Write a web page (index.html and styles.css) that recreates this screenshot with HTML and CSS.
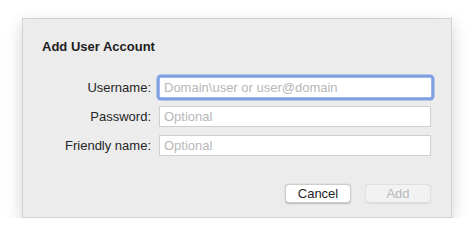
FILE: index.html
```html
<!DOCTYPE html>
<html>
<head>
<meta charset="utf-8">
<link rel="stylesheet" href="styles.css">
</head>
<body>
<div class="dialog">
  <div class="title">Add User Account</div>
  <div class="form">
    <label class="label">Username:</label>
    <input class="field focused" type="text" placeholder="Domain\user or user@domain">
    <label class="label">Password:</label>
    <input class="field" type="text" placeholder="Optional">
    <label class="label">Friendly name:</label>
    <input class="field" type="text" placeholder="Optional">
  </div>
  <div class="actions">
    <button class="btn">Cancel</button>
    <button class="btn disabled">Add</button>
  </div>
</div>
</body>
</html>
```
FILE: styles.css
```css
html, body {
  margin: 0;
  padding: 0;
  background: #ffffff;
}
body {
  font-family: "Liberation Sans", Arial, sans-serif;
  font-size: 13px;
  color: #262626;
}
.dialog {
  box-sizing: border-box;
  margin: 18px 0 0 22px;
  width: 430px;
  height: 200px;
  background: #ececec;
  border: 1px solid #d2d2d2;
  box-shadow: 0 6px 16px rgba(0, 0, 0, 0.18);
  padding-top: 20px;
}
.title {
  margin-left: 19px;
  font-weight: bold;
  font-size: 13px;
  line-height: 15px;
  letter-spacing: 0;
  color: #1e1e1e;
}
.form {
  margin-top: 23px;
  display: grid;
  grid-template-columns: 128px 272px;
  column-gap: 8px;
  row-gap: 8px;
  align-items: center;
}
.label {
  text-align: right;
  line-height: 21px;
  color: #262626;
}
.field {
  box-sizing: border-box;
  height: 21px;
  width: 272px;
  margin: 0;
  padding: 0 4px;
  border: 1px solid #cfcfcf;
  background: #ffffff;
  font-family: "Liberation Sans", Arial, sans-serif;
  font-size: 13px;
  color: #2a2a2a;
  outline: none;
}
.field::placeholder {
  color: #b7b7b7;
}
.focused {
  width: 273px;
  border-color: #9fb6ea;
  box-shadow: 0 0 0 2.5px #7e9fe2;
  border-radius: 2px;
}
.actions {
  margin-top: 28px;
  width: 408px;
  display: flex;
  justify-content: flex-end;
  gap: 14px;
}
.btn {
  box-sizing: border-box;
  width: 66px;
  height: 19px;
  margin: 0;
  padding: 0;
  border: 0.5px solid #cdcdcd;
  border-radius: 4px;
  background: #ffffff;
  box-shadow: 0 0.5px 1.5px rgba(0, 0, 0, 0.22);
  font-family: "Liberation Sans", Arial, sans-serif;
  font-size: 13px;
  line-height: 17px;
  color: #1f1f1f;
}
.disabled {
  background: #f2f2f2;
  border-color: #e0e0e0;
  box-shadow: 0 0.5px 1px rgba(0, 0, 0, 0.08);
  color: #b8b8b8;
}
```
